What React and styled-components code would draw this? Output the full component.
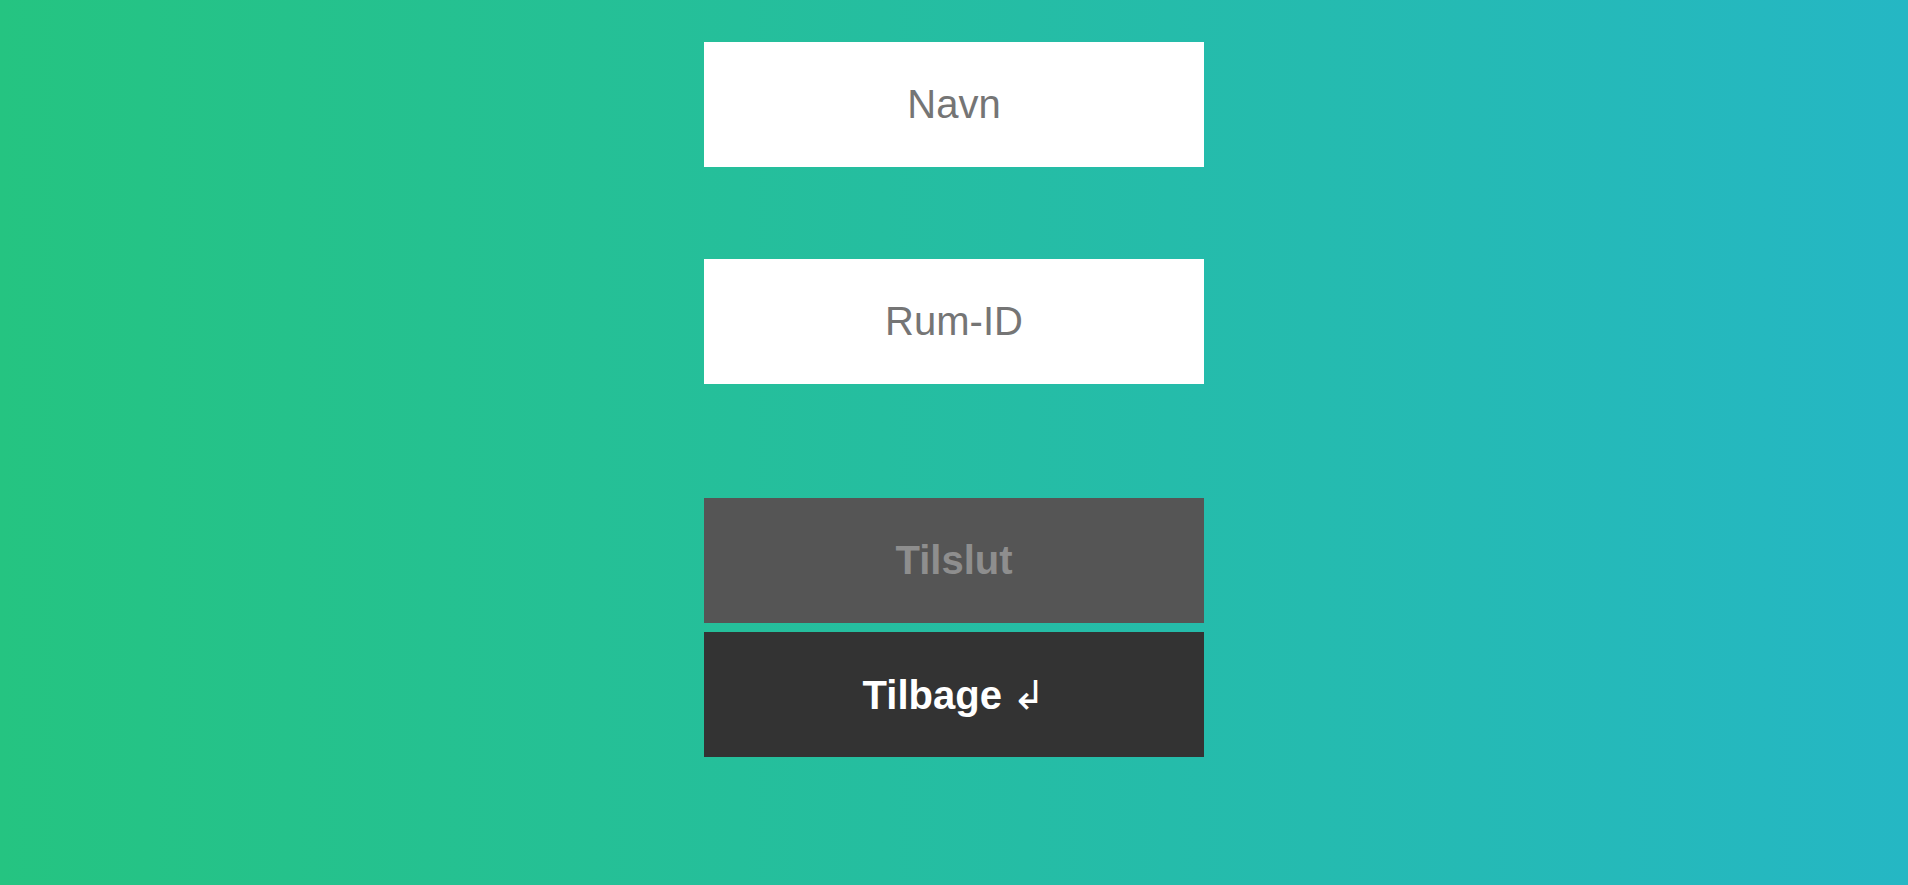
import styled, { createGlobalStyle } from "styled-components";

const GlobalStyle = createGlobalStyle`
  html, body {
    margin: 0;
    min-height: 100%;
  }
  body {
    font-family: "Trebuchet MS", "Liberation Sans", sans-serif;
    background: linear-gradient(to right, #25c481, #25b7c4);
    min-height: 885px;
  }
`;

const Page = styled.div`
  display: flex;
  justify-content: center;
  padding-top: 42px;
  min-height: 843px;
`;

const Form = styled.form`
  display: flex;
  flex-direction: column;
  width: 500px;
`;

const Field = styled.input`
  box-sizing: border-box;
  height: 125px;
  width: 100%;
  border: none;
  outline: none;
  background: #fff;
  text-align: center;
  font-family: inherit;
  font-size: 40px;
  color: #333;
  margin-bottom: ${(p) => p.$gap || 0}px;

  &::placeholder {
    color: #757575;
  }
`;

const Actions = styled.div`
  display: flex;
  flex-direction: column;
  gap: 9px;
`;

const Button = styled.button`
  height: 125px;
  width: 100%;
  border: none;
  font-family: inherit;
  font-size: 40px;
  font-weight: 700;
  cursor: pointer;
  background: ${(p) => (p.$dark ? "#333333" : "#555555")};
  color: ${(p) => (p.$dark ? "#ffffff" : "#8e8e8e")};
`;

const Arrow = styled.span`
  font-family: "DejaVu Sans", sans-serif;
  font-weight: 400;
  margin-left: 10px;
`;

export default function App() {
  return (
    <>
      <GlobalStyle />
      <Page>
        <Form onSubmit={(e) => e.preventDefault()}>
          <Field placeholder="Navn" $gap={92} />
          <Field placeholder="Rum-ID" $gap={114} />
          <Actions>
            <Button type="submit" disabled>
              Tilslut
            </Button>
            <Button type="button" $dark>
              Tilbage<Arrow>↲</Arrow>
            </Button>
          </Actions>
        </Form>
      </Page>
    </>
  );
}
